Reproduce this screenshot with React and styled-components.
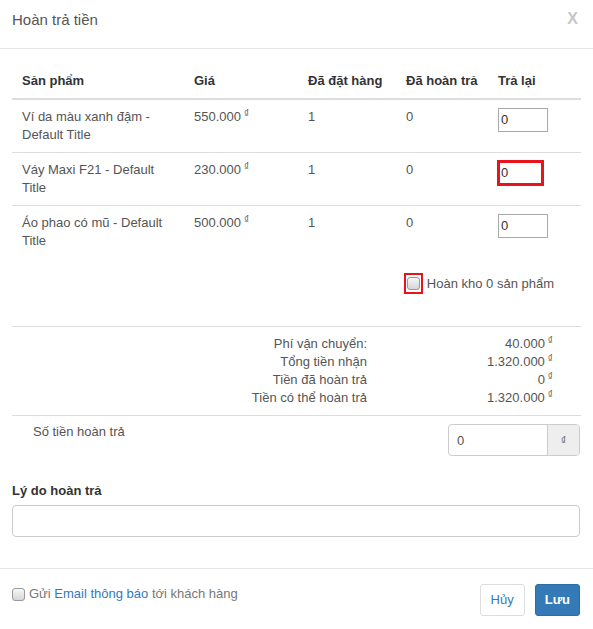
import React from "react";
import styled, { createGlobalStyle } from "styled-components";

const Global = createGlobalStyle`
  html, body { margin: 0; padding: 0; background: #fff; }
  body {
    font-family: "Liberation Sans", Arial, sans-serif;
    font-size: 13px;
    color: #555;
  }
  * { box-sizing: border-box; }
`;

const Modal = styled.div`
  width: 593px;
  background: #fff;
`;

const Header = styled.div`
  height: 49px;
  display: flex;
  justify-content: space-between;
  align-items: flex-start;
  padding: 10px 15px 0 12px;
  border-bottom: 1px solid #e5e5e5;
`;

const Title = styled.div`
  font-size: 15px;
  line-height: 20px;
  color: #555;
`;

const Close = styled.div`
  font-size: 16px;
  font-weight: bold;
  line-height: 16px;
  color: #c6c6c6;
  margin-top: 1px;
`;

const Body = styled.div`
  padding: 15px 12px 31px 12px;
`;

const Grid = styled.div`
  display: grid;
  grid-template-columns: 172px 114px 98px 92px 1fr;
`;

const HeadCell = styled.div`
  padding: 8px 10px;
  line-height: 18px;
  font-weight: bold;
  color: #333;
  border-bottom: 2px solid #ddd;
`;

const Cell = styled.div`
  padding: 8px 10px;
  line-height: 18px;
  color: #555;
  border-top: ${(p) => (p.$first ? "none" : "1px solid #ddd")};
`;

const InputCell = styled(Cell)`
  padding: 8px 10px 0 10px;
`;

const Dong = styled.span`
  font-size: 10px;
  margin-left: 3px;
  vertical-align: 4px;
  line-height: 0;
`;

const QtyBox = styled.div`
  width: ${(p) => (p.$error ? "47px" : "50px")};
  height: ${(p) => (p.$error ? "26px" : "24px")};
  border: ${(p) => (p.$error ? "3px solid #e8141c" : "1px solid #a9a9a9")};
  margin-top: ${(p) => (p.$error ? "-1px" : "0")};
  margin-left: ${(p) => (p.$error ? "-1px" : "0")};
  padding-left: ${(p) => (p.$error ? "1px" : "2px")};
  display: flex;
  align-items: center;
  color: #333;
  font-size: 13px;
  background: #fff;
`;

const StockRow = styled.div`
  display: flex;
  justify-content: flex-end;
  align-items: center;
  padding-right: 27px;
  margin-top: 15px;
  gap: 4px;
`;

const ErrorFrame = styled.span`
  display: inline-flex;
  align-items: center;
  justify-content: center;
  width: 19px;
  height: 21px;
  border: 2px solid #e8141c;
`;

const Check = styled.span`
  display: inline-block;
  width: 13px;
  height: 13px;
  border: 1px solid #9a9a9a;
  border-radius: 3px;
  background: linear-gradient(#f6f6f6, #d6d6d6);
  flex: none;
`;

const CheckLabel = styled.span`
  color: #555;
  line-height: 18px;
`;

const Summary = styled.div`
  margin-top: 32px;
  border-top: 1px solid #ddd;
  border-bottom: 1px solid #ddd;
  padding: 8px 0 8px;
  display: grid;
  grid-template-columns: 355px 186px;
  line-height: 18px;
  color: #555;
`;

const SumLabel = styled.div`
  text-align: right;
`;

const SumValue = styled.div`
  text-align: right;
`;

const RefundRow = styled.div`
  display: flex;
  align-items: flex-start;
  padding: 7px 1px 0 21px;
`;

const RefundLabel = styled.div`
  line-height: 18px;
  color: #555;
`;

const InputGroup = styled.div`
  margin-left: auto;
  margin-top: 1px;
  display: flex;
  width: 132px;
  height: 32px;
  border: 1px solid #ccc;
  border-radius: 4px;
  overflow: hidden;
`;

const GroupInput = styled.div`
  flex: 1;
  display: flex;
  align-items: center;
  padding-left: 8px;
  color: #555;
`;

const Addon = styled.div`
  width: 32px;
  background: #eee;
  border-left: 1px solid #ccc;
  display: flex;
  align-items: center;
  justify-content: center;
  font-size: 10px;
  color: #555;
`;

const FieldLabel = styled.div`
  margin-top: 26px;
  font-weight: bold;
  color: #333;
  line-height: 18px;
`;

const TextBox = styled.div`
  margin-top: 5px;
  width: 568px;
  height: 32px;
  border: 1px solid #ccc;
  border-radius: 4px;
`;

const Footer = styled.div`
  border-top: 1px solid #e5e5e5;
  padding: 15px 13px 13px 12px;
  display: flex;
  justify-content: space-between;
  align-items: flex-start;
`;

const NotifyLabel = styled.label`
  display: flex;
  align-items: center;
  gap: 4px;
  margin-top: 1px;
  line-height: 18px;
  color: #777;
`;

const Link = styled.span`
  color: #337ab7;
`;

const Buttons = styled.div`
  display: flex;
  gap: 10px;
`;

const Button = styled.button`
  font-family: inherit;
  font-size: 13px;
  line-height: 18px;
  height: 32px;
  padding: 6px ${(p) => (p.$primary ? "9px" : "10px")};
  border-radius: 3px;
  cursor: pointer;
  border: 1px solid ${(p) => (p.$primary ? "#2e6da4" : "#ddd")};
  background: ${(p) => (p.$primary ? "#337ab7" : "#fff")};
  color: ${(p) => (p.$primary ? "#fff" : "#337ab7")};
  font-weight: ${(p) => (p.$primary ? "bold" : "normal")};
`;

const products = [
  { name: "Ví da màu xanh đậm - Default Title", price: "550.000" },
  { name: "Váy Maxi F21 - Default Title", price: "230.000", error: true },
  { name: "Áo phao có mũ - Default Title", price: "500.000" },
];

const summary = [
  ["Phí vận chuyển:", "40.000"],
  ["Tổng tiền nhận", "1.320.000"],
  ["Tiền đã hoàn trả", "0"],
  ["Tiền có thể hoàn trả", "1.320.000"],
];

export default function App() {
  return (
    <>
      <Global />
      <Modal>
        <Header>
          <Title>Hoàn trả tiền</Title>
          <Close>X</Close>
        </Header>
        <Body>
          <Grid>
            <HeadCell>Sản phẩm</HeadCell>
            <HeadCell>Giá</HeadCell>
            <HeadCell>Đã đặt hàng</HeadCell>
            <HeadCell>Đã hoàn trả</HeadCell>
            <HeadCell>Trả lại</HeadCell>
            {products.map((p, i) => (
              <React.Fragment key={i}>
                <Cell $first={i === 0}>{p.name}</Cell>
                <Cell $first={i === 0}>
                  {p.price}
                  <Dong>₫</Dong>
                </Cell>
                <Cell $first={i === 0}>1</Cell>
                <Cell $first={i === 0}>0</Cell>
                <InputCell $first={i === 0}>
                  <QtyBox $error={p.error}>0</QtyBox>
                </InputCell>
              </React.Fragment>
            ))}
          </Grid>
          <StockRow>
            <ErrorFrame>
              <Check />
            </ErrorFrame>
            <CheckLabel>Hoàn kho 0 sản phẩm</CheckLabel>
          </StockRow>
          <Summary>
            {summary.map(([l, v]) => (
              <React.Fragment key={l}>
                <SumLabel>{l}</SumLabel>
                <SumValue>
                  {v}
                  <Dong>₫</Dong>
                </SumValue>
              </React.Fragment>
            ))}
          </Summary>
          <RefundRow>
            <RefundLabel>Số tiền hoàn trả</RefundLabel>
            <InputGroup>
              <GroupInput>0</GroupInput>
              <Addon>₫</Addon>
            </InputGroup>
          </RefundRow>
          <FieldLabel>Lý do hoàn trả</FieldLabel>
          <TextBox />
        </Body>
        <Footer>
          <NotifyLabel>
            <Check />
            <span>
              Gửi <Link>Email thông báo</Link> tới khách hàng
            </span>
          </NotifyLabel>
          <Buttons>
            <Button>Hủy</Button>
            <Button $primary>Lưu</Button>
          </Buttons>
        </Footer>
      </Modal>
    </>
  );
}
